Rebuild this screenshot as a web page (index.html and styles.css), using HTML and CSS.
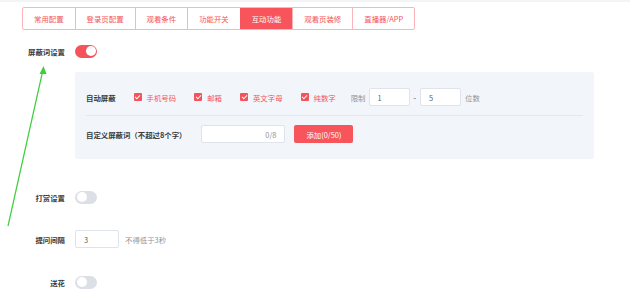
FILE: index.html
```html
<!DOCTYPE html>
<html lang="zh-CN">
<head>
  <meta charset="UTF-8" />
  <title>互动功能</title>
  <link rel="stylesheet" href="styles.css">
</head>
<body>
  <div class="topbar"></div>

  <nav class="tabs">
    <a class="tab">常用配置</a>
    <a class="tab">登录页配置</a>
    <a class="tab">观看条件</a>
    <a class="tab">功能开关</a>
    <a class="tab active">互动功能</a>
    <a class="tab">观看页装修</a>
    <a class="tab">直播器/APP</a>
  </nav>

  <div class="form">
    <div class="row row-first">
      <div class="label">屏蔽词设置</div>
      <div class="control"><span class="switch on"></span></div>
    </div>

    <div class="panel">
      <div class="panel-row">
        <span class="panel-label">自动屏蔽</span>
        <label class="check"><span class="box"></span>手机号码</label>
        <label class="check"><span class="box"></span>邮箱</label>
        <label class="check"><span class="box"></span>英文字母</label>
        <label class="check"><span class="box"></span>纯数字</label>
        <span class="muted limit">限制</span>
        <span class="input small">1</span>
        <span class="dash">-</span>
        <span class="input small">5</span>
        <span class="muted">位数</span>
      </div>
      <div class="divider"></div>
      <div class="panel-row">
        <span class="panel-label custom">自定义屏蔽词（不超过8个字）</span>
        <span class="input word"><span class="count">0/8</span></span>
        <button class="btn">添加(0/50)</button>
      </div>
    </div>

    <div class="row row-reward">
      <div class="label">打赏设置</div>
      <div class="control"><span class="switch"></span></div>
    </div>

    <div class="row row-ask">
      <div class="label">提问间隔</div>
      <div class="control">
        <span class="input interval">3</span>
        <span class="muted hint">不得低于3秒</span>
      </div>
    </div>

    <div class="row row-flower">
      <div class="label">送花</div>
      <div class="control"><span class="switch"></span></div>
    </div>
  </div>

  <svg class="arrow" width="60" height="240" viewBox="0 0 60 240">
    <line x1="8" y1="226" x2="42.5" y2="72" stroke="#3ccf3c" stroke-width="1.2"/>
    <polygon points="43.5,66 39.5,74 46.5,74" fill="#3ccf3c"/>
  </svg>
</body>
</html>
```

FILE: styles.css
```css
* { box-sizing: border-box; margin: 0; padding: 0; }

body {
  font-family: "Noto Sans CJK SC", "Noto Sans", sans-serif;
  font-size: 7.4px;
  color: #333;
  background: #fff;
  width: 630px;
  height: 297px;
  overflow: hidden;
  position: relative;
}

.topbar {
  height: 2px;
  background: #f3f4f6;
}

.tabs {
  display: inline-flex;
  margin: 5px 0 0 22px;
  border: 1px solid #fbb5b8;
  border-radius: 2px;
  overflow: hidden;
}

.tab {
  height: 21px;
  line-height: 21px;
  padding: 0 11px;
  color: #f5535b;
  border-left: 1px solid #fbb5b8;
  white-space: nowrap;
}

.tab:first-child { border-left: none; }

.tab.active {
  background: #f7545c;
  color: #fff;
  border-left-color: #f7545c;
}

.row {
  display: flex;
  align-items: center;
}

.label {
  width: 65px;
  text-align: right;
  font-weight: bold;
  color: #3a3a3a;
}

.control {
  margin-left: 10px;
  display: flex;
  align-items: center;
}

.row-first { margin-top: 14px; height: 14px; }
.row-reward { margin-top: 31px; height: 14px; }
.row-ask { margin-top: 26px; height: 18px; }
.row-flower { margin-top: 27px; height: 14px; }

.switch {
  display: block;
  width: 22px;
  height: 13px;
  border-radius: 7px;
  background: #dcdfe6;
  position: relative;
}

.switch::after {
  content: "";
  position: absolute;
  top: 1.5px;
  left: 1.5px;
  width: 10px;
  height: 10px;
  border-radius: 50%;
  background: #fff;
}

.switch.on { background: #f5535b; }
.switch.on::after { left: 10.5px; }

.panel {
  margin: 14px 0 0 75px;
  width: 519px;
  padding: 16px 11px;
  background: #f2f6fb;
  border-radius: 2px;
}

.panel-row {
  display: flex;
  align-items: center;
  height: 18px;
}

.panel-label {
  font-weight: bold;
  color: #3a3a3a;
  margin-right: 18px;
}

.panel-label.custom { margin-right: 15px; }

.divider {
  height: 1px;
  background: #e4e8ee;
  margin: 9px 0;
  width: 497px;
}

.check {
  display: flex;
  align-items: center;
  color: #f5535b;
  margin-right: 18px;
}

.check:nth-of-type(4) { margin-right: 15px; }

.box {
  width: 8px;
  height: 8px;
  border-radius: 1px;
  background: #f5535b;
  margin-right: 5px;
  position: relative;
}

.box::after {
  content: "";
  position: absolute;
  left: 2.6px;
  top: 0.8px;
  width: 2px;
  height: 4.2px;
  border: solid #fff;
  border-width: 0 1px 1px 0;
  transform: rotate(45deg);
}

.muted { color: #909399; }

.limit { margin-right: 3px; }

.input {
  display: flex;
  align-items: center;
  height: 18px;
  background: #fff;
  border: 1px solid #dfe3ea;
  border-radius: 2px;
  color: #606266;
  padding: 0 8px;
}

.input.small { width: 41px; }

.dash { margin: 0 4px; color: #333; }

.input.small + .muted { margin-left: 4px; }

.input.word {
  width: 84px;
  justify-content: flex-end;
  color: #909399;
  margin-right: 9px;
}

.btn {
  height: 18px;
  width: 59px;
  border: none;
  border-radius: 2px;
  background: #f7545c;
  color: #fff;
  font-family: inherit;
  font-size: 7.4px;
}

.input.interval { width: 44px; }

.hint { margin-left: 6px; }

.arrow {
  position: absolute;
  left: 0;
  top: 0;
}
```
